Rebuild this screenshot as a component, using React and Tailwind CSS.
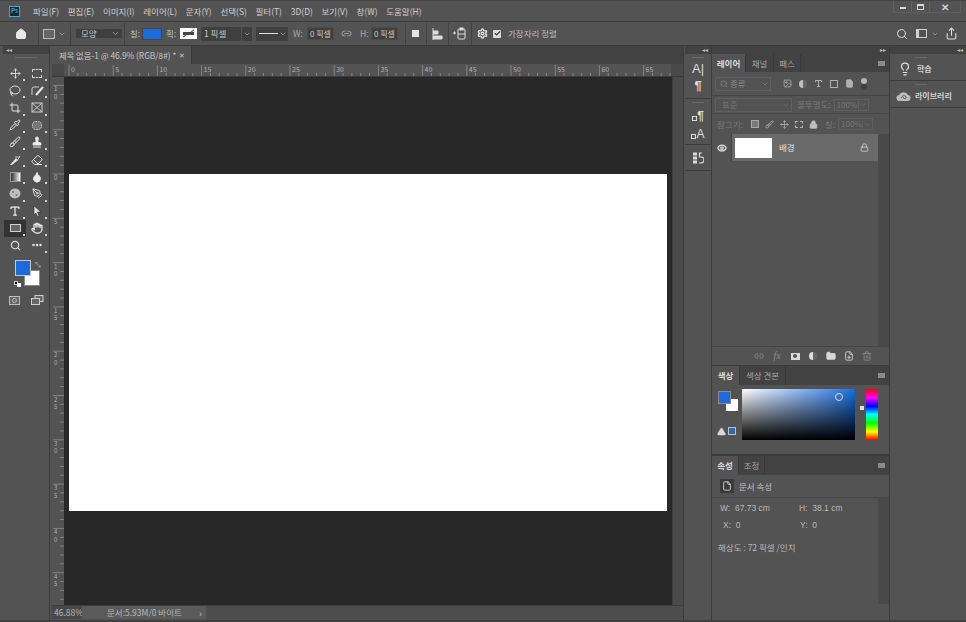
import React from "react";
import { Home, Search, ChevronDown, Link2, Settings, Check, Move, Lasso, Crop, Pipette, Brush, Stamp, Eraser, Droplet, PenTool, Type, Hand, Ellipsis, Lightbulb, Eye, Lock, Image, Folder, Trash2, FilePlus, File, TriangleAlert, Share } from "lucide-react";

const menus = ["파일(F)", "편집(E)", "이미지(I)", "레이어(L)", "문자(Y)", "선택(S)", "필터(T)", "3D(D)", "보기(V)", "창(W)", "도움말(H)"];

// small triangle in the corner of tools that hold a flyout
const Tool = ({ children, corner = true, active = false }) => (
  <div className={`relative w-[22px] h-[17.2px] flex items-center justify-center rounded-[1px] ${active ? "bg-[#333333]" : ""}`}>
    {children}
    {corner && <span className="absolute right-[1px] bottom-[1px] w-[2px] h-[2px] bg-[#d0d0d0]" />}
  </div>
);

const Sep = ({ className = "" }) => <div className={`w-px h-[22px] bg-[#424242] ${className}`} />;

const Grip = ({ className = "" }) => <div className={`h-px bg-[#6a6a6a] ${className}`} />;

const Dropdown = ({ className, children }) => (
  <div className={`h-[15px] bg-[#3f3f3f] flex items-center justify-between pl-[5px] pr-[2px] text-[#c8c8c8] ${className}`}>
    <span>{children}</span>
    <ChevronDown size={9} color="#a8a8a8" />
  </div>
);

const HRuler = () => {
  const ticks = [];
  for (let i = 0; i <= 68; i++) {
    const x = 5 + i * 8.84;
    ticks.push(<line key={i} x1={x} x2={x} y1={i % 5 === 0 ? 1 : 9} y2="12" stroke="#8f8f8f" strokeWidth="0.8" />);
    if (i % 5 === 0 && i <= 65) ticks.push(<text key={`t${i}`} x={x + 2} y="8" fontSize="7" fill="#b0b0b0">{i}</text>);
  }
  return <svg width="608" height="12" className="block">{ticks}</svg>;
};

const VRuler = () => {
  const items = [];
  for (let i = -10; i <= 48; i++) {
    const y = 97 + i * 8.86;
    items.push(<line key={i} x1={i % 5 === 0 ? 1 : 8} x2="12" y1={y} y2={y} stroke="#8f8f8f" strokeWidth="0.8" />);
    if (i % 5 === 0 && i <= 45) {
      const digits = String(Math.abs(i)).split("");
      digits.forEach((d, n) => items.push(<text key={`t${i}${n}`} x="2" y={y + 6 + n * 7.5} fontSize="6" fill="#b0b0b0">{d}</text>));
    }
  }
  return <svg width="12" height="529" className="block">{items}</svg>;
};

const PanelTab = ({ active, children, className = "" }) => (
  <div className={`h-full flex items-center justify-center text-[8.5px] border-r border-[#383838] ${active ? "bg-[#535353] text-[#dcdcdc] font-bold" : "text-[#a8a8a8]"} ${className}`}>{children}</div>
);

const PanelHead = ({ children, className = "h-[19px]" }) => (
  <div className={`${className} bg-[#424242] flex items-stretch shrink-0`}>
    {children}
    <div className="ml-auto mr-[4px] self-center w-[7px] h-[5px] bg-[#8a8a8a]" />
  </div>
);

const Cell = ({ children }) => <div className="w-[18px] flex items-center justify-center">{children}</div>;

export default function App() {
  return (
    <div className="w-[966px] h-[622px] overflow-hidden flex flex-col bg-[#535353] text-[#c8c8c8] text-[8.5px] font-['Noto_Sans_CJK_KR','Noto_Sans',sans-serif] leading-none">
      {/* menu bar */}
      <div className="h-[22px] shrink-0 flex items-center border-b border-[#3c3c3c] border-t border-t-[#444444] relative">
        <div className="ml-[9px] w-[11px] h-[11px] bg-[#0f2c3d] border border-[#3fa8dc] text-[#3fa8dc] text-[6px] font-bold flex items-center justify-center">Ps</div>
        <div className="ml-[13px] flex gap-[8.7px] text-[#cfcfcf]">
          {menus.map((m) => <span key={m}>{m}</span>)}
        </div>
        <div className="absolute right-[5px] top-0 w-[68px] h-[12px] border border-t-0 border-[#606060] flex items-center text-[#d0d0d0]">
          <div className="w-[18px] flex justify-center border-r border-[#606060] h-full items-center"><span className="w-[6px] h-[2px] mt-[3px] bg-[#d8d8d8]" /></div>
          <div className="w-[18px] flex justify-center border-r border-[#606060] h-full items-center"><span className="w-[7px] h-[6px] border border-[#d8d8d8] border-t-2" /></div>
          <div className="flex-1 text-center text-[10px] font-bold">✕</div>
        </div>
      </div>

      {/* options bar */}
      <div className="h-[23px] shrink-0 flex items-center bg-[#535353]">
        <div className="w-[38px] flex justify-center pl-[4px]"><Home size={12} fill="#e8e8e8" color="#e8e8e8" /></div>
        <Sep />
        <div className="ml-[4px] w-[12px] h-[10px] border border-[#bdbdbd] bg-[#666666]" />
        <ChevronDown size={8} color="#a8a8a8" className="ml-[3px]" />
        <Sep className="ml-[4px]" />
        <Dropdown className="ml-[5px] w-[46px] !h-[9px]">모양</Dropdown>
        <Sep className="ml-[2px]" />
        <span className="ml-[5px] w-[9px] text-[#bdbdbd]">칠:</span>
        <div className="ml-[4px] w-[18px] h-[10px] bg-[#1b6bdd] outline outline-[#444444]" />
        <span className="ml-[5px] w-[9px] text-[#bdbdbd]">획:</span>
        <div className="ml-[5px] w-[17px] h-[11px] bg-white flex items-center justify-center">
          <svg width="13" height="9" viewBox="0 0 13 9">
            <rect x="1" y="3" width="11" height="3" fill="#444" />
            <path d="M1 8l3-2M9 3l3-2" stroke="#e02020" strokeWidth="1.2" />
          </svg>
        </div>
        <div className="ml-[4px] w-[40px] h-[14px] bg-[#3f3f3f] pl-[3px] flex items-center">1 픽셀</div>
        <div className="ml-px w-[10px] h-[14px] bg-[#3f3f3f] flex items-center justify-center"><ChevronDown size={8} color="#a8a8a8" /></div>
        <div className="ml-[4px] w-[32px] h-[14px] bg-[#3f3f3f] flex items-center pl-[3px] gap-[1px]">
          <span className="w-[19px] h-px bg-[#e0e0e0]" />
          <ChevronDown size={8} color="#a8a8a8" />
        </div>
        <span className="ml-[5px] w-[10px] text-[#a8a8a8]">W:</span>
        <div className="ml-[4px] w-[27px] h-[13px] bg-[#3f3f3f] border border-[#4a4a4a] pl-[2px] flex items-center text-[8px] whitespace-nowrap">0 픽셀</div>
        <Link2 size={11} color="#a8a8a8" className="ml-[7px]" />
        <span className="ml-[8px] w-[8px] text-[#a8a8a8]">H:</span>
        <div className="ml-[3px] w-[27px] h-[13px] bg-[#3f3f3f] border border-[#4a4a4a] pl-[2px] flex items-center text-[8px] whitespace-nowrap">0 픽셀</div>
        <Sep className="ml-[7px]" />
        <div className="ml-[6px] w-[7px] h-[7px] bg-[#e4e4e4]" />
        <Sep className="ml-[7px]" />
        <svg width="11" height="12" viewBox="0 0 11 12" className="ml-[5px]"><path d="M1 0v12M1 3h5v3H1M1 8h9v3H1" stroke="#dcdcdc" fill="#dcdcdc" strokeWidth="1" /></svg>
        <Sep className="ml-[5px]" />
        <svg width="13" height="13" viewBox="0 0 13 13" className="ml-[4px]"><path d="M0 6h3M1.5 4.5v3" stroke="#dcdcdc" /><rect x="5" y="2" width="7" height="10" rx="1" fill="none" stroke="#dcdcdc" /><rect x="6.5" y="0.5" width="4" height="3" fill="#dcdcdc" /><path d="M5 7h7" stroke="#dcdcdc" /></svg>
        <Sep className="ml-[5px]" />
        <Settings size={11} color="#e0e0e0" strokeWidth={3} className="ml-[5px]" />
        <div className="ml-[5px] w-[8px] h-[8px] bg-[#dcdcdc] rounded-[1px] flex items-center justify-center"><Check size={7} color="#333" strokeWidth={4} /></div>
        <span className="ml-[7px] text-[#bdbdbd] whitespace-nowrap">가장자리 정렬</span>
        <div className="ml-auto mr-[8px] flex items-center">
          <Search size={12} color="#dcdcdc" />
          <div className="ml-[8px] w-[11px] h-[9px] border border-[#d0d0d0] border-l-[3px]" />
          <ChevronDown size={8} color="#a8a8a8" className="ml-[4px]" />
          <Share size={13} color="#dcdcdc" className="ml-[6px]" />
        </div>
      </div>

      {/* workspace */}
      <div className="flex-1 flex min-h-0 border-t border-[#3c3c3c] border-b-2 border-b-[#404040]">
        {/* tools */}
        <div className="w-[52px] shrink-0 pl-[3px] flex">
          <div className="w-[47px] flex flex-col border-r border-[#3c3c3c]">
            <div className="h-[8px] bg-[#424242] text-[6px] text-[#bdbdbd] pl-[3px] flex items-center">◂◂</div>
            <Grip className="mx-[12px] mt-[3px]" />
            <div className="mt-[7px] grid grid-cols-[22px_22px] justify-center">
              <Tool><Move size={11} color="#dcdcdc" /></Tool>
              <Tool><div className="w-[10px] h-[9px] border border-dashed border-[#cfcfcf]" /></Tool>
              <Tool><Lasso size={12} color="#dcdcdc" /></Tool>
              <Tool><svg width="13" height="12" viewBox="0 0 13 12"><path d="M8 2H3a2 2 0 0 0-2 2v6" stroke="#cfcfcf" fill="none" /><path d="M5 10l7-8" stroke="#e8e8e8" strokeWidth="2" /></svg></Tool>
              <Tool><Crop size={12} color="#e0e0e0" /></Tool>
              <Tool><svg width="12" height="11" viewBox="0 0 12 11"><rect x="1" y="1" width="10" height="9" fill="none" stroke="#cfcfcf" /><path d="M1 1l10 9M11 1L1 10" stroke="#cfcfcf" /></svg></Tool>
              <Tool><Pipette size={12} color="#e0e0e0" /></Tool>
              <Tool><svg width="12" height="11" viewBox="0 0 12 11"><rect x="1.5" y="1.5" width="9" height="8" rx="3" fill="#777" stroke="#cfcfcf" strokeDasharray="1.5 1" /></svg></Tool>
              <Tool><Brush size={12} color="#e8e8e8" /></Tool>
              <Tool><Stamp size={12} color="#e8e8e8" fill="#e8e8e8" /></Tool>
              <Tool><svg width="13" height="12" viewBox="0 0 13 12"><path d="M1 11l6-7 2 2-6 5z" fill="#e8e8e8" /><path d="M6 3h5M8 7l3-5" stroke="#bdbdbd" /></svg></Tool>
              <Tool><Eraser size={12} color="#e8e8e8" /></Tool>
              <Tool><span className="w-[11px] h-[10px] border border-[#9a9a9a] bg-linear-to-r from-[#333333] to-white" /></Tool>
              <Tool><Droplet size={12} color="#e8e8e8" fill="#e8e8e8" /></Tool>
              <Tool><svg width="12" height="11" viewBox="0 0 12 11"><ellipse cx="6" cy="5.5" rx="5.5" ry="5" fill="#bdbdbd" /><circle cx="4" cy="4" r="1" fill="#777" /><circle cx="7.5" cy="7" r="1" fill="#777" /></svg></Tool>
              <Tool><PenTool size={11} color="#dcdcdc" /></Tool>
              <Tool><Type size={12} color="#e8e8e8" strokeWidth={2.5} /></Tool>
              <Tool><svg width="10" height="12" viewBox="0 0 10 12"><path d="M2 1l7 6H5.5l1.5 4-1.5.5L4 8 2 10z" fill="#e0e0e0" stroke="#222" strokeWidth="0.5" /></svg></Tool>
              <Tool active><div className="w-[11px] h-[8px] border border-[#cfcfcf] bg-[#666666]" /></Tool>
              <Tool><Hand size={12} color="#f0f0f0" strokeWidth={2.5} /></Tool>
              <Tool corner={false}><Search size={11} color="#dcdcdc" strokeWidth={2.5} /></Tool>
              <Tool><Ellipsis size={12} color="#e8e8e8" strokeWidth={3} /></Tool>
            </div>
            <div className="relative h-[30px] mt-[6px]">
              <div className="absolute left-[21px] top-[10px] w-[16px] h-[16px] bg-white border border-[#888888]" />
              <div className="absolute left-[12px] top-0 w-[16px] h-[16px] bg-[#1b6bdd] border border-[#c8c8c8]" />
              <span className="absolute left-[32px] top-[1px] text-[7px] text-[#cfcfcf]">⤡</span>
              <div className="absolute left-[11px] top-[21px] w-[4px] h-[4px] bg-[#111111] border border-[#cccccc]" />
              <div className="absolute left-[14px] top-[23px] w-[4px] h-[4px] bg-white" />
            </div>
            <div className="mt-[5px] flex justify-center gap-[11px] items-center">
              <div className="w-[11px] h-[9px] border border-[#bdbdbd] bg-[#666666] flex items-center justify-center"><span className="w-[5px] h-[5px] rounded-full border border-[#bdbdbd]" /></div>
              <svg width="13" height="11" viewBox="0 0 13 11"><rect x="4" y="0.5" width="8" height="6" fill="#666" stroke="#cfcfcf" /><rect x="0.5" y="3.5" width="8" height="6" fill="#666" stroke="#cfcfcf" /></svg>
            </div>
          </div>
        </div>

        {/* document */}
        <div className="w-[632px] shrink-0 flex flex-col border-r border-[#3c3c3c]">
          <div className="h-[18px] bg-[#424242] shrink-0 flex">
            <div className="w-[140px] bg-[#535353] flex items-center justify-between pl-[7px] pr-[6px] text-[8.3px] text-[#c8c8c8] border-r border-[#383838]">
              <span className="whitespace-nowrap">제목 없음-1 @ 46.9% (RGB/8#) *</span>
              <span className="text-[7px]">✕</span>
            </div>
          </div>
          <div className="h-[13px] shrink-0 flex border-b border-[#3a3a3a]">
            <div className="w-[12px] bg-[#484848]" />
            <HRuler />
            <div className="w-[12px] bg-[#494949]" />
          </div>
          <div className="flex-1 flex min-h-0">
            <div className="w-[12px] overflow-hidden shrink-0"><VRuler /></div>
            <div className="w-[608px] bg-[#282828] pl-[5px] pt-[97px]">
              <div className="w-[598px] h-[337px] bg-white" />
            </div>
            <div className="flex-1 bg-[#4a4a4a] border-l border-[#3f3f3f]" />
          </div>
          <div className="h-[14px] shrink-0 flex items-center text-[#b8b8b8] border-t border-[#3c3c3c] mb-[1px]">
            <div className="w-[30px] h-full bg-[#484848] flex items-center pl-[2px]">46.88%</div>
            <div className="w-[124px] h-full bg-[#5a5a5a] flex items-center pl-[25px] whitespace-nowrap">문서:5.93M/0 바이트
              <span className="ml-auto mr-[4px] text-[10px]">›</span>
            </div>
            <div className="flex-1 h-full bg-[#4d4d4d]" />
          </div>
        </div>

        {/* icon strip */}
        <div className="w-[27px] shrink-0 flex flex-col items-center border-r border-[#3c3c3c] ml-[1px] text-[#dcdcdc] font-['Liberation_Sans',sans-serif]">
          <div className="h-[8px] w-full bg-[#424242] shrink-0 text-[6px] text-[#bdbdbd] flex items-center justify-end pr-[3px]">◂◂</div>
          <div className="h-[45px] w-full border-b border-[#3c3c3c] flex flex-col items-center pt-[8px] gap-[3px]">
            <Grip className="w-[12px] -mt-[5px] mb-[1px]" />
            <span className="text-[13px] h-[14px]">A|</span>
            <span className="text-[13px] h-[14px] font-bold">¶</span>
          </div>
          <div className="h-[46px] w-full border-b border-[#3c3c3c] flex flex-col items-center pt-[8px] gap-[4px]">
            <Grip className="w-[12px] -mt-[5px] mb-[1px]" />
            <div className="flex items-end h-[14px]"><span className="w-[5px] h-[5px] border border-[#dcdcdc] mb-px" /><span className="text-[12px] font-bold">¶</span></div>
            <div className="flex items-end h-[14px]"><span className="w-[5px] h-[5px] border border-[#dcdcdc] mb-px" /><span className="text-[12px]">A</span></div>
          </div>
          <div className="h-[26px] w-full border-b border-[#3c3c3c] flex flex-col items-center justify-center">
            <svg width="12" height="12" viewBox="0 0 12 12"><rect x="1" y="0.5" width="4" height="3" fill="#dcdcdc" /><rect x="1" y="4.5" width="4" height="3" fill="#dcdcdc" /><rect x="1" y="8.5" width="4" height="3" fill="#dcdcdc" /><path d="M10 1H7.5v4H9a2 2 0 0 1 0 6H7" stroke="#dcdcdc" fill="none" strokeWidth="1.2" /></svg>
          </div>
        </div>

        {/* panels */}
        <div className="w-[178px] shrink-0 flex flex-col border-r border-[#3c3c3c]">
          <div className="h-[8px] bg-[#424242] shrink-0 text-[6px] text-[#bdbdbd] flex items-center justify-end pr-[3px]">▸▸</div>

          {/* layers */}
          <div className="h-[312px] shrink-0 flex flex-col border-b border-[#3a3a3a]">
            <PanelHead className="h-[18px]">
              <PanelTab active className="w-[34px]">레이어</PanelTab>
              <PanelTab className="w-[28px]">채널</PanelTab>
              <PanelTab className="w-[27px]">패스</PanelTab>
            </PanelHead>
            <div className="h-[24px] flex items-center border-b border-[#464646] text-[#8a8a8a]">
              <div className="ml-[3px] w-[56px] h-[14px] border border-[#5f5f5f] flex items-center pl-[4px] gap-[2px]">
                <Search size={8} color="#8a8a8a" /><span>종류</span><ChevronDown size={8} className="ml-auto mr-[1px]" />
              </div>
              <div className="ml-[12px] flex items-center gap-[7px]">
                <Image size={9} color="#b0b0b0" />
                <span className="w-[8px] h-[8px] rounded-full bg-linear-to-r from-[#c0c0c0] from-50% to-[#666666] to-50%" />
                <Type size={9} color="#b0b0b0" strokeWidth={3} />
                <span className="w-[8px] h-[8px] border border-[#b0b0b0]" />
                <File size={9} color="#b0b0b0" fill="#b0b0b0" />
              </div>
              <div className="ml-[7px] flex flex-col items-center">
                <span className="w-[6px] h-[6px] rounded-full bg-[#b8b8b8]" />
                <span className="w-[6px] h-[6px] rounded-full bg-[#3f3f3f]" />
              </div>
            </div>
            <div className="h-[18px] flex items-center border-b border-[#464646] text-[#777777]">
              <div className="ml-[3px] w-[77px] h-[14px] border border-[#5f5f5f] flex items-center pl-[6px]">
                <span>표준</span><ChevronDown size={8} className="ml-auto mr-[1px]" />
              </div>
              <span className="ml-[5px]">불투명도:</span>
              <div className="ml-[3px] w-[25px] h-[12px] border border-[#5f5f5f] text-[8px] flex items-center pl-[2px]">100%</div>
              <div className="w-[10px] h-[12px] border border-l-0 border-[#5f5f5f] flex items-center justify-center"><ChevronDown size={7} /></div>
            </div>
            <div className="h-[20px] flex items-center text-[#777777]">
              <span className="ml-[5px]">잠그기:</span>
              <div className="ml-[8px] flex items-center gap-[6px]">
                <span className="w-[8px] h-[8px] border border-[#a8a8a8] bg-[#7a7a7a]" />
                <Brush size={9} color="#b0b0b0" />
                <Move size={9} color="#b0b0b0" />
                <span className="w-[8px] h-[7px] border border-dashed border-[#b0b0b0]" />
                <Lock size={9} color="#c0c0c0" fill="#c0c0c0" />
              </div>
              <span className="ml-[7px]">칠:</span>
              <div className="ml-[3px] w-[25px] h-[12px] border border-[#5f5f5f] text-[8px] flex items-center pl-[2px]">100%</div>
              <div className="w-[10px] h-[12px] border border-l-0 border-[#5f5f5f] flex items-center justify-center"><ChevronDown size={7} /></div>
            </div>
            <div className="flex-1 flex min-h-0">
              <div className="w-[166px] flex flex-col">
                <div className="h-[27px] flex">
                  <div className="w-[20px] flex items-center justify-center border-r border-[#424242]"><Eye size={10} color="#e0e0e0" strokeWidth={3} /></div>
                  <div className="flex-1 bg-[#6a6a6a] flex items-center pl-[3px]">
                    <div className="w-[37px] h-[20px] bg-white" />
                    <span className="ml-[7px] text-[#e0e0e0]">배경</span>
                    <Lock size={9} color="#d8d8d8" className="ml-auto mr-[9px]" />
                  </div>
                </div>
              </div>
              <div className="flex-1 bg-[#494949]" />
            </div>
            <div className="h-[19px] shrink-0 flex items-center pl-[38px] border-t border-[#464646]">
              <Cell><Link2 size={10} color="#8a8a8a" /></Cell>
              <Cell><span className="italic font-['Liberation_Serif',serif] text-[10px] text-[#8a8a8a]">fx</span></Cell>
              <Cell><span className="w-[9px] h-[7px] bg-[#d8d8d8] flex items-center justify-center"><span className="w-[4px] h-[4px] rounded-full bg-[#535353]" /></span></Cell>
              <Cell><span className="w-[8px] h-[8px] rounded-full bg-linear-to-r from-[#dcdcdc] from-50% to-[#666666] to-50%" /></Cell>
              <Cell><Folder size={10} color="#d8d8d8" fill="#d8d8d8" /></Cell>
              <Cell><FilePlus size={10} color="#d8d8d8" /></Cell>
              <Cell><Trash2 size={10} color="#8a8a8a" /></Cell>
            </div>
          </div>

          {/* color */}
          <div className="h-[90px] shrink-0 flex flex-col border-b-2 border-[#3a3a3a]">
            <PanelHead>
              <PanelTab active className="w-[28px]">색상</PanelTab>
              <PanelTab className="w-[46px]">색상 견본</PanelTab>
            </PanelHead>
            <div className="flex pt-[4px]">
              <div className="w-[30px] relative h-[52px]">
                <div className="absolute left-[14px] top-[10px] w-[12px] h-[12px] bg-white" />
                <div className="absolute left-[6px] top-[2px] w-[13px] h-[13px] bg-[#1b6bdd] border border-[#8a8a8a]" />
                <TriangleAlert size={9} color="#d8d8d8" fill="#d8d8d8" className="absolute left-[5px] top-[38px]" />
                <div className="absolute left-[16px] top-[38px] w-[8px] h-[8px] bg-[#2a6db5] border border-[#c0c0c0]" />
              </div>
              <div className="relative w-[113px] h-[51px] bg-linear-to-r from-white to-[#0a6fe0]">
                <div className="absolute inset-0 bg-linear-to-b from-transparent to-black" />
                <div className="absolute left-[93px] top-[4px] w-[8px] h-[8px] rounded-full border border-[#dcdcdc]" />
              </div>
              <div className="relative ml-[11px] w-[12px] h-[51px] bg-[linear-gradient(to_bottom,#ff0000,#ff00ff_17%,#0000ff_34%,#00ffff_50%,#00ff00_67%,#ffff00_84%,#ff0000)]">
                <div className="absolute left-[-6px] top-[17px] w-[4px] h-[4px] bg-[#e0e0e0]" />
              </div>
            </div>
          </div>

          {/* properties */}
          <div className="flex-1 flex flex-col min-h-0">
            <PanelHead>
              <PanelTab active className="w-[27px]">속성</PanelTab>
              <PanelTab className="w-[26px]">조정</PanelTab>
            </PanelHead>
            <div className="h-[23px] shrink-0 flex items-center border-b border-[#464646]">
              <div className="ml-[8px] w-[14px] h-[14px] bg-[#3a3a3a] flex items-center justify-center"><File size={10} color="#e0e0e0" /></div>
              <span className="ml-[5px] text-[#c0c0c0]">문서 속성</span>
            </div>
            <div className="flex-1 flex min-h-0">
              <div className="w-[166px] text-[8.5px] text-[#b8b8b8] font-['Liberation_Sans','Noto_Sans_CJK_KR',sans-serif]">
                <div className="mt-[6px] grid grid-cols-[79px_1fr] gap-y-[8px] pl-[8px]">
                  <span>W:&nbsp; 67.73 cm</span>
                  <span>H:&nbsp; 38.1 cm</span>
                  <span className="pl-[3px]">X:&nbsp; 0</span>
                  <span className="pl-px">Y:&nbsp; 0</span>
                </div>
                <div className="mt-[14px] pl-[6px] font-['Noto_Sans_CJK_KR',sans-serif]">해상도 : 72 픽셀 /인치</div>
              </div>
              <div className="flex-1 bg-[#494949] mb-[16px]" />
            </div>
          </div>
        </div>

        {/* far right */}
        <div className="flex-1 flex flex-col">
          <div className="h-[8px] bg-[#424242] shrink-0 text-[6px] text-[#bdbdbd] flex items-center justify-end pr-[3px]">◂◂</div>
          <div className="h-[27px] flex flex-col border-b border-[#3c3c3c]">
            <Grip className="w-[12px] mt-[3px] ml-[25px]" />
            <div className="flex-1 flex items-center pl-[8px] text-[#d0d0d0] font-bold">
              <Lightbulb size={14} color="#e0e0e0" />
              <span className="ml-[5px] text-[8px]">학습</span>
            </div>
          </div>
          <div className="h-[27px] flex flex-col border-b border-[#3c3c3c]">
            <Grip className="w-[12px] mt-[3px] ml-[25px]" />
            <div className="flex-1 flex items-center pl-[6px] text-[#d0d0d0] font-bold">
              <svg width="15" height="11" viewBox="0 0 15 11"><path d="M4 10a3 3 0 0 1-1-6 5 5 0 0 1 9 0 3 3 0 0 1-1 6z" fill="#bdbdbd" /><path d="M5 7c2-3 4-3 5-1s-3 2-3 0" stroke="#535353" fill="none" /></svg>
              <span className="ml-[4px] text-[8px] whitespace-nowrap">라이브러리</span>
            </div>
          </div>
        </div>
      </div>
    </div>
  );
}
